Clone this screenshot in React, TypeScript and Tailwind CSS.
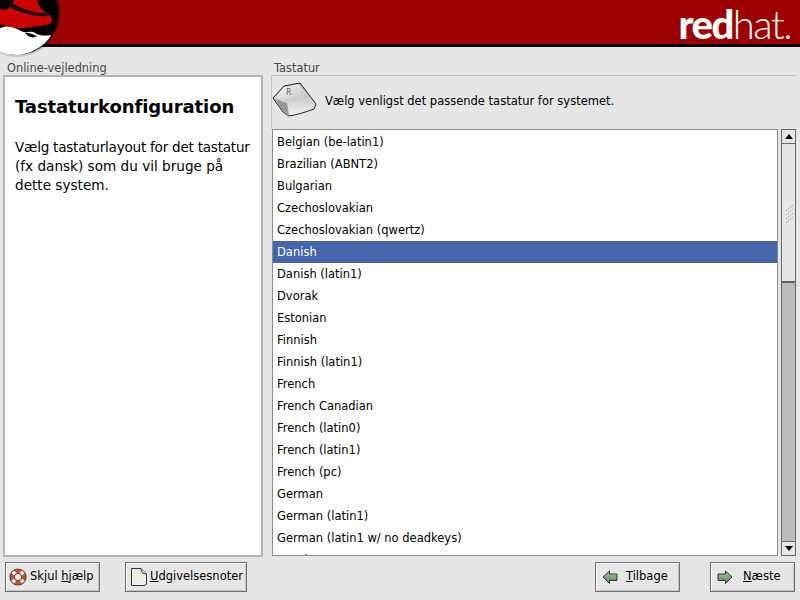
import React from "react";

const items = [
  "Belgian (be-latin1)", "Brazilian (ABNT2)", "Bulgarian", "Czechoslovakian", "Czechoslovakian (qwertz)",
  "Danish", "Danish (latin1)", "Dvorak", "Estonian", "Finnish", "Finnish (latin1)", "French", "French Canadian",
  "French (latin0)", "French (latin1)", "French (pc)", "German", "German (latin1)", "German (latin1 w/ no deadkeys)", "Greek",
];

function Logo() {
  return (
    <svg className="absolute left-0 top-0" width="66" height="62" viewBox="0 0 66 62">
      <circle cx="17" cy="13" r="44" fill="#000" opacity="0.12" />
      <circle cx="17" cy="13" r="42" fill="#000" />
      <path d="M-1 29 C6 24 14 27 21 31 C27 34 30 30 35 33 C40 36 46 36 51 35 C47 44 33 54 17 55 C8 55 2 53 -1 51Z" fill="#fff" />
      <path d="M-1 8 C3 11 8 11 12 4 L14 0 H37 C38 5 42 10 46 13 C52 16 54 20 51 23 C44 27 33 26 24 28 C16 29 8 26 -1 24Z" fill="#cc0000" />
      <path d="M12 3 C20 8 32 13 45 13 C47 14 48 15 48 16 C36 17 20 13 10 7Z" fill="#111" />
      <path d="M25 33 C30 32 33 35 37 36 C33 39 28 37 25 33Z" fill="#111" />
      <circle cx="59" cy="38" r="1" fill="#500" />
    </svg>
  );
}

function Key() {
  return (
    <svg width="46" height="36" viewBox="0 0 46 36" className="shrink-0">
      <defs>
        <linearGradient id="k1" x1="0" y1="0" x2="1" y2="1">
          <stop offset="0" stopColor="#fafafa" />
          <stop offset="1" stopColor="#bcbcbc" />
        </linearGradient>
        <linearGradient id="k2" x1="0" y1="0" x2="0" y2="1">
          <stop offset="0" stopColor="#a8a8a8" />
          <stop offset="1" stopColor="#f4f4f4" />
        </linearGradient>
      </defs>
      <path d="M1 16 L12 4 L28 1 L44 22 L42 27 C34 30 24 33 17 34 L11 30 Z" fill="url(#k2)" stroke="#222" strokeWidth="1" strokeLinejoin="round" />
      <path d="M3 16 L12 5 L27 2 L36 13 L16 20 Z" fill="url(#k1)" />
      <path d="M3 17 L15 21 L17 33 L11 29Z" fill="#999" />
      <text x="14" y="13" fontSize="8" fill="#666" fontFamily="DejaVu Sans">R</text>
    </svg>
  );
}

function Lifebuoy() {
  return (
    <svg width="18" height="18" viewBox="0 0 18 18">
      <circle cx="9" cy="9" r="8" fill="#e04a1c" stroke="#444" strokeWidth="1.2" />
      <path d="M3.7 3.7 L6.5 6.5 M14.3 3.7 L11.5 6.5 M3.7 14.3 L6.5 11.5 M14.3 14.3 L11.5 11.5" stroke="#eee" strokeWidth="3.5" />
      <circle cx="9" cy="9" r="3.7" fill="#e6e6e6" stroke="#444" strokeWidth="1" />
    </svg>
  );
}

function Doc() {
  return (
    <svg width="18" height="20" viewBox="0 0 18 20">
      <path d="M1.5 1.5 H11 L16.5 7 V16 Q16.5 18.5 14 18.5 H1.5Z" fill="#eeeee6" stroke="#333" strokeLinejoin="round" />
      <path d="M11 1.5 Q11 7 16.5 7" fill="#d8d8d0" stroke="#333" strokeLinejoin="round" />
    </svg>
  );
}

function Arrow({ right }: { right?: boolean }) {
  return (
    <svg width="16" height="14" viewBox="0 0 16 14" style={right ? { transform: "scaleX(-1)" } : undefined}>
      <defs>
        <linearGradient id="ar" x1="0" y1="0" x2="0" y2="1">
          <stop offset="0" stopColor="#a8c4a4" />
          <stop offset="1" stopColor="#5c8058" />
        </linearGradient>
      </defs>
      <path d="M1 7 L7.5 1 V4 H15 V10.5 H7.5 V13.5Z" fill="url(#ar)" stroke="#2c3a2c" strokeLinejoin="round" />
    </svg>
  );
}

function Button({ className, children }: { className: string; children: React.ReactNode }) {
  return (
    <div className={"flex h-[30px] items-center border border-[#6e6e6e] bg-[#e6e6e6] shadow-[inset_1px_1px_0_#fff,inset_-1px_-1px_0_#c4c4c4] " + className}>
      {children}
    </div>
  );
}

export default function App() {
  return (
    <div className="relative flex h-[600px] w-[800px] flex-col overflow-hidden bg-[#e6e6e6] font-['DejaVu_Sans',sans-serif] text-[11.5px] text-black">
      <div className="flex h-[47px] shrink-0 items-start justify-end border-b-[3px] border-black bg-[#9c0000] pr-[9px]">
        <div className="mt-[2px] font-['Lato',sans-serif] text-[40px] leading-[44px] tracking-[-1.5px] text-white">
          <span className="font-black">red</span>
          <span className="font-light">hat.</span>
        </div>
      </div>
      <Logo />

      <div className="flex min-h-0 flex-1 gap-[8px] pl-[3px] pr-[4px] pt-[14px]">
        <div className="flex w-[260px] shrink-0 flex-col">
          <div className="h-[14px] pl-[4px] text-[11.4px] leading-[14px] text-[#444]">Online-vejledning</div>
          <div className="h-[482px] border-2 border-[#b4b4b4] bg-white px-[10px]">
            <div className="mt-[17px] text-[18px] font-bold leading-[26px] tracking-[-0.1px]">Tastaturkonfiguration</div>
            <div className="mt-[18px] whitespace-nowrap text-[13.6px] leading-[19px]">
              <span className="tracking-[-0.25px]">Vælg tastaturlayout for det tastatur</span><br />(fx dansk) som du vil bruge på<br />dette system.
            </div>
          </div>
        </div>

        <div className="flex min-w-0 flex-1 flex-col">
          <div className="h-[14px] pl-[3px] text-[11.4px] leading-[14px] text-[#444]">Tastatur</div>
          <div className="flex h-[54px] items-start gap-[7px] border-l border-t border-[#c4c4c4] pt-[6px]">
            <Key />
            <span className="mt-[11px]">Vælg venligst det passende tastatur for systemet.</span>
          </div>
          <div className="flex h-[427px] gap-[3px] pl-[1px]">
            <div className="w-[506px] overflow-hidden border border-[#8c8c8c] bg-white pt-[1px]">
              {items.map((t) => (
                <div
                  key={t}
                  className={"h-[22px] pl-[4px] leading-[22px] " + (t === "Danish" ? "bg-[#4464ac] text-white" : "")}
                >
                  {t}
                </div>
              ))}
            </div>
            <div className="flex w-[15px] flex-col border border-[#666] bg-[#bcbcbc]">
              <div className="flex h-[14px] items-center justify-center border-b border-[#666] bg-[#e6e6e6]">
                <svg width="8" height="5" viewBox="0 0 8 5"><path d="M4 0 L8 5 H0Z" fill="#000" /></svg>
              </div>
              <div className="relative h-[139px] border-b-2 border-[#666] bg-[#e6e6e6]">
                <svg className="absolute left-[3px] top-[61px]" width="9" height="18" viewBox="0 0 9 18">
                  <path d="M1 6 L8 0 M1 10 L8 4 M1 14 L8 8 M1 18 L8 12" stroke="#999" strokeWidth="1" strokeDasharray="1.5 1" />
                </svg>
              </div>
              <div className="flex-1" />
              <div className="flex h-[14px] items-center justify-center border-t border-[#666] bg-[#e6e6e6]">
                <svg width="8" height="5" viewBox="0 0 8 5"><path d="M4 5 L8 0 H0Z" fill="#000" /></svg>
              </div>
            </div>
          </div>
        </div>
      </div>

      <div className="flex h-[38px] shrink-0 items-start pl-[5px] pr-[5px]">
        <Button className="w-[95px] gap-[3px] pl-[3px]"><Lifebuoy /><span>Skjul <u>h</u>jælp</span></Button>
        <Button className="ml-[25px] w-[122px] gap-[2px] pl-[4px]"><Doc /><span><u>U</u>dgivelsesnoter</span></Button>
        <Button className="ml-auto w-[85px] gap-[8px] pl-[6px]"><Arrow /><span><u>T</u>ilbage</span></Button>
        <Button className="ml-[30px] w-[85px] gap-[10px] pl-[6px]"><Arrow right /><span><u>N</u>æste</span></Button>
      </div>
    </div>
  );
}
